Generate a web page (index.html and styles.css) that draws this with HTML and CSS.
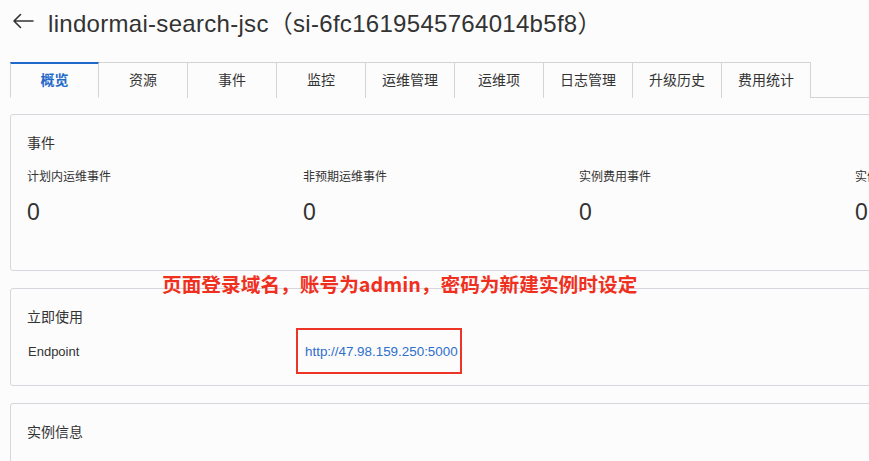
FILE: index.html
```html
<!DOCTYPE html>
<html lang="zh-CN">
<head>
<meta charset="utf-8">
<title>lindormai-search-jsc</title>
<link rel="stylesheet" href="styles.css">
</head>
<body>
<div class="page">
  <header class="header">
    <span class="back">
      <svg width="22" height="16" viewBox="0 0 22 16"><path d="M21 8H2M8.5 1.5L2 8l6.5 6.5" fill="none" stroke="#333" stroke-width="1.6" stroke-linecap="round" stroke-linejoin="round"/></svg>
    </span>
    <h1 class="title">lindormai-search-jsc（si-6fc1619545764014b5f8）</h1>
  </header>

  <nav class="tabs">
    <div class="tab active">概览</div>
    <div class="tab">资源</div>
    <div class="tab">事件</div>
    <div class="tab">监控</div>
    <div class="tab">运维管理</div>
    <div class="tab">运维项</div>
    <div class="tab">日志管理</div>
    <div class="tab">升级历史</div>
    <div class="tab">费用统计</div>
  </nav>

  <section class="card card-events">
    <h2 class="card-title">事件</h2>
    <div class="stats">
      <div class="stat"><div class="stat-label">计划内运维事件</div><div class="stat-value">0</div></div>
      <div class="stat"><div class="stat-label">非预期运维事件</div><div class="stat-value">0</div></div>
      <div class="stat"><div class="stat-label">实例费用事件</div><div class="stat-value">0</div></div>
      <div class="stat"><div class="stat-label">实例</div><div class="stat-value">0</div></div>
    </div>
  </section>

  <section class="card card-use">
    <h2 class="card-title">立即使用</h2>
    <div class="kv">
      <div class="kv-label">Endpoint</div>
      <div class="kv-value"><span class="highlight"><a class="link" href="#">http://47.98.159.250:5000</a></span></div>
    </div>
  </section>

  <section class="card card-info">
    <h2 class="card-title">实例信息</h2>
  </section>

  <div class="annotation">页面登录域名，账号为admin，密码为新建实例时设定</div>
</div>
</body>
</html>
```

FILE: styles.css
```css
html, body {
  margin: 0;
  padding: 0;
  background: #fcfcfc;
  overflow: hidden;
  width: 869px;
  height: 461px;
}
body {
  font-family: "Liberation Sans", "Noto Sans CJK SC", sans-serif;
  color: #333;
}
.page {
  position: relative;
  padding: 0 0 0 10px;
}
.header {
  display: flex;
  align-items: center;
  height: 42px;
  margin-bottom: 20px;
}
.back {
  display: flex;
  width: 24px;
  margin-left: 2px;
  margin-right: 12px;
  margin-top: 0;
}
.title {
  margin: 0;
  font-size: 24px;
  font-weight: 400;
  color: #333;
  letter-spacing: 0.3px;
  white-space: nowrap;
}
.tabs {
  display: flex;
  height: 35px;
  border-bottom: 1px solid #d4d4d8;
  margin-right: -20px;
}
.tab {
  width: 89px;
  border-top: 1px solid #d4d4d8;
  border-right: 1px solid #d4d4d8;
  display: flex;
  align-items: center;
  justify-content: center;
  font-size: 14px;
  font-family: "Noto Sans CJK SC", sans-serif;
  color: #333;
  box-sizing: border-box;
  height: 36px;
  margin-bottom: -1px;
  padding-bottom: 3px;
  background: #fcfcfc;
}
.tab.active {
  width: 89px;
  border-top: 2px solid #1f69c9;
  border-left: 1px solid #d4d4d8;
  border-bottom: 1px solid #fcfcfc;
  color: #1f69c9;
  font-weight: 700;
}
.card {
  border: 1px solid #d6d6dc;
  border-radius: 3px;
  margin-right: -40px;
  padding: 17px 16px 0 16px;
  box-sizing: border-box;
}
.card-title {
  margin: 0;
  font-size: 14px;
  font-weight: 400;
  line-height: 20px;
  font-family: "Noto Sans CJK SC", sans-serif;
  color: #333;
}
.card-events {
  margin-top: 16px;
  height: 157px;
}
.stats {
  display: grid;
  grid-template-columns: repeat(4, 276px);
  margin-top: 15px;
}
.stat-label {
  font-size: 12px;
  line-height: 18px;
  font-family: "Noto Sans CJK SC", sans-serif;
  color: #333;
  white-space: nowrap;
}
.stat-value {
  font-size: 23px;
  line-height: 28px;
  margin-top: 13px;
  color: #333;
}
.card-use {
  margin-top: 17px;
  height: 98px;
}
.kv {
  display: grid;
  grid-template-columns: 269px auto;
  align-items: center;
  margin-top: 2px;
}
.kv-label {
  font-size: 13px;
  padding-left: 1px;
  color: #333;
}
.highlight {
  border: 2px solid #ee3426;
  width: 162px;
  height: 42px;
  box-sizing: content-box;
  display: inline-flex;
  align-items: center;
}
.link {
  font-size: 13.4px;
  color: #2e6fcc;
  text-decoration: none;
  margin-left: 7px;
}
.card-info {
  margin-top: 17px;
  height: 80px;
}
.annotation {
  position: absolute;
  left: 162px;
  top: 269px;
  font-size: 19.7px;
  font-weight: 700;
  color: #f0301f;
  font-family: "Noto Sans CJK SC", sans-serif;
  white-space: nowrap;
}
```
